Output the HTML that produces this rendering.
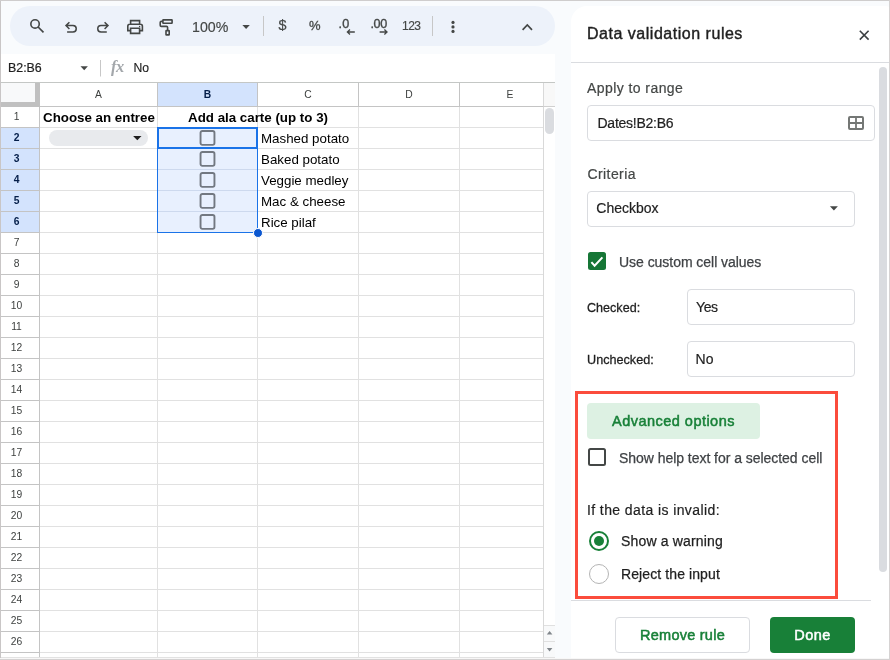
<!DOCTYPE html>
<html><head><meta charset="utf-8"><title>Data validation</title>
<style>
*{box-sizing:border-box;margin:0;padding:0}
html,body{width:890px;height:660px;overflow:hidden}
body{background:#f9fbfd;font-family:"Liberation Sans",sans-serif;position:relative;color:#1f1f1f}
.a{position:absolute}
.t{position:absolute;white-space:nowrap;line-height:1}
svg{position:absolute;overflow:visible}
#wrap{position:absolute;left:0;top:0;width:890px;height:660px;will-change:transform}
#frameL{left:0;top:0;width:1px;height:660px;background:#c9c6c6}
#frameT{left:0;top:0;width:890px;height:1px;background:#cfcdcd}
#frameB{left:0;top:659px;width:890px;height:1px;background:#d4d1d1}
#frameB2{left:0;top:658px;width:890px;height:1px;background:#f8f7f7}
#frameR{left:889px;top:0;width:1px;height:660px;background:#d6d3d3}
#pill{left:10px;top:6px;width:545px;height:40px;border-radius:20px;background:#edf2fa}
#fbar{left:1px;top:54px;width:554px;height:28px;background:#fff}
#fline{left:1px;top:82px;width:554px;height:1px;background:#c4c7c5}
#grid{left:1px;top:83px;width:554px;height:575px;background:#fff;overflow:hidden}
.vl{position:absolute;width:1px;background:#e1e1e1}
.hl{position:absolute;height:1px;background:#e1e1e1}
.rh{position:absolute;left:0;width:39px;height:20px;font-size:10.3px;color:#3c3f3e;text-align:center;line-height:19px;padding-right:8px}
.rh.sel{background:#d3e3fd;color:#041e49;font-weight:bold}
.ch{position:absolute;top:0;height:23px;font-size:10.3px;color:#3c3f3e;text-align:center;line-height:23px}
.ch.sel{background:#d3e3fd;color:#041e49;font-weight:bold}
.cell{position:absolute;font-size:13.33px;line-height:21px;white-space:nowrap;color:#000}
.cb{position:absolute;width:15.8px;height:15.8px;border:1.9px solid #727881;border-radius:2.6px}
#panel{left:571px;top:6px;width:329px;height:652px;background:#fff;border-radius:16px 16px 0 0}
.inp{position:absolute;border:1px solid #dadce0;border-radius:4px;background:#fff}
</style></head><body>
<div id="wrap">
<div class="a" id="pill"></div>
<div class="a" id="fbar"></div>
<div class="a" id="fline"></div>
<svg style="left:0;top:0" width="560" height="50" viewBox="0 0 560 50" fill="none" stroke="#444746" stroke-width="1.6">
<circle cx="35.05" cy="23.95" r="4.2"/><path d="M38.1 27 L43.5 32.3" stroke-width="1.7"/>
<path d="M69.4 22.2 L66 25.6 L69.4 29 M66.2 25.6 H73 a3.25 3.25 0 0 1 0 6.5 H67.1" stroke-width="1.5"/>
<path d="M104.6 22.2 L108 25.6 L104.6 29 M107.8 25.6 H101 a3.25 3.25 0 0 0 0 6.5 H106.8" stroke-width="1.5"/>
<path d="M130.6 24.2 V20.6 H139.6 V24.2 M130.6 30.6 H127.8 V26.2 a2 2 0 0 1 2 -2 H140.4 a2 2 0 0 1 2 2 V30.6 H139.6 M130.6 28.2 H139.6 V33.4 H130.6 Z"/>
<rect x="162.9" y="19.9" width="9.2" height="3.3" rx="0.4"/><path d="M162.9 21.4 H161.4 Q160.2 21.4 160.2 22.6 V25.3 Q160.2 26.4 161.3 26.4 H166.5 Q167.6 26.4 167.6 27.5 V30.4"/><rect x="166" y="30.6" width="3.2" height="4.3" rx="0.4"/><circle cx="139.6" cy="26.5" r="0.7" fill="#444746" stroke="none"/>
<path d="M263.5 16 V36 M432.5 16 V36" stroke="#c7c7c7" stroke-width="1"/>
<path d="M242.4 25 H249.8 L246.1 29 Z" fill="#444746" stroke="none"/>
<path d="M354.8 32 H347.6 M350 29.6 L347.4 32 L350 34.4" stroke-width="1.3"/>
<path d="M379.6 32 H386.8 M384.4 29.6 L387 32 L384.4 34.4" stroke-width="1.3"/>
<circle cx="453" cy="22.4" r="1.6" fill="#444746" stroke="none"/><circle cx="453" cy="26.9" r="1.6" fill="#444746" stroke="none"/><circle cx="453" cy="31.4" r="1.6" fill="#444746" stroke="none"/>
<path d="M522.6 29.8 L527.3 25 L532 29.8" stroke-width="1.7"/>
</svg>
<div class="t" style="left:192px;top:20px;font-size:14.2px;color:#444746;-webkit-text-stroke:0.15px #444746">100%</div>
<div class="t" style="left:278.6px;top:18px;font-size:14.4px;color:#444746;-webkit-text-stroke:0.2px #444746">$</div>
<div class="t" style="left:309px;top:19px;font-size:13px;color:#444746;-webkit-text-stroke:0.3px #444746;letter-spacing:-0.3px">%</div>
<div class="t" style="left:338.5px;top:18px;font-size:12.6px;color:#444746;-webkit-text-stroke:0.35px #444746;letter-spacing:0.2px">.0</div>
<div class="t" style="left:370.5px;top:18px;font-size:12.6px;color:#444746;-webkit-text-stroke:0.35px #444746;letter-spacing:-0.4px">.00</div>
<div class="t" style="left:402px;top:20px;font-size:12px;color:#444746;letter-spacing:-0.5px;-webkit-text-stroke:0.15px #444746">123</div>
<div class="t" style="left:8px;top:62px;font-size:12.4px;color:#1f1f1f;-webkit-text-stroke:0.2px #1f1f1f">B2:B6</div>
<svg style="left:0;top:50px" width="160" height="34" viewBox="0 50 160 34"><path d="M80.5 66.2 H87.9 L84.2 70.2 Z" fill="#444746"/><path d="M100.5 60 V76.5" stroke="#c7c7c7" stroke-width="1"/></svg>
<div class="t" style="left:111px;top:59px;font-size:16.5px;color:#a3a7ab;font-family:'Liberation Serif',serif;font-style:italic;font-weight:bold;letter-spacing:-0.6px">fx</div>
<div class="t" style="left:133.5px;top:62px;font-size:12.2px;color:#1f1f1f;-webkit-text-stroke:0.15px #1f1f1f">No</div>
<div class="a" id="grid">
<div class="a" style="left:0;top:0;width:34px;height:19px;background:#f8f9fa"></div>
<div class="a" style="left:34px;top:0;width:5px;height:24px;background:#c0c0c0"></div>
<div class="a" style="left:0;top:19px;width:39px;height:5px;background:#c0c0c0"></div>
<div class="ch" style="left:39px;width:117px">A</div>
<div class="ch sel" style="left:157px;width:99px">B</div>
<div class="ch" style="left:257px;width:100px">C</div>
<div class="ch" style="left:358px;width:100px">D</div>
<div class="ch" style="left:459px;width:100px">E</div>
<div class="rh" style="top:24px">1</div>
<div class="rh sel" style="top:45px">2</div>
<div class="rh sel" style="top:66px">3</div>
<div class="rh sel" style="top:87px">4</div>
<div class="rh sel" style="top:108px">5</div>
<div class="rh sel" style="top:129px">6</div>
<div class="rh" style="top:150px">7</div>
<div class="rh" style="top:171px">8</div>
<div class="rh" style="top:192px">9</div>
<div class="rh" style="top:213px">10</div>
<div class="rh" style="top:234px">11</div>
<div class="rh" style="top:255px">12</div>
<div class="rh" style="top:276px">13</div>
<div class="rh" style="top:297px">14</div>
<div class="rh" style="top:318px">15</div>
<div class="rh" style="top:339px">16</div>
<div class="rh" style="top:360px">17</div>
<div class="rh" style="top:381px">18</div>
<div class="rh" style="top:402px">19</div>
<div class="rh" style="top:423px">20</div>
<div class="rh" style="top:444px">21</div>
<div class="rh" style="top:465px">22</div>
<div class="rh" style="top:486px">23</div>
<div class="rh" style="top:507px">24</div>
<div class="rh" style="top:528px">25</div>
<div class="rh" style="top:549px">26</div>
<div class="rh" style="top:570px">27</div>
<div class="a" style="left:157px;top:45px;width:99px;height:104px;background:#e8f0fe"></div>
<div class="vl" style="left:156px;top:0;height:575px"></div>
<div class="vl" style="left:256px;top:0;height:575px"></div>
<div class="vl" style="left:357px;top:0;height:575px"></div>
<div class="vl" style="left:458px;top:0;height:575px"></div>
<div class="vl" style="left:559px;top:0;height:575px"></div>
<div class="vl" style="left:156px;top:0;height:23px;background:#c4c4c4"></div>
<div class="vl" style="left:256px;top:0;height:23px;background:#c4c4c4"></div>
<div class="vl" style="left:357px;top:0;height:23px;background:#c4c4c4"></div>
<div class="vl" style="left:458px;top:0;height:23px;background:#c4c4c4"></div>
<div class="vl" style="left:559px;top:0;height:23px;background:#c4c4c4"></div>
<div class="vl" style="left:38px;top:24px;height:551px;background:#c4c4c4"></div>
<div class="hl" style="left:39px;top:23px;width:516px;background:#c4c4c4"></div>
<div class="hl" style="left:0;top:44px;width:543px"></div>
<div class="hl" style="left:0;top:65px;width:543px"></div>
<div class="hl" style="left:0;top:86px;width:543px"></div>
<div class="hl" style="left:0;top:107px;width:543px"></div>
<div class="hl" style="left:0;top:128px;width:543px"></div>
<div class="hl" style="left:0;top:149px;width:543px"></div>
<div class="hl" style="left:0;top:170px;width:543px"></div>
<div class="hl" style="left:0;top:191px;width:543px"></div>
<div class="hl" style="left:0;top:212px;width:543px"></div>
<div class="hl" style="left:0;top:233px;width:543px"></div>
<div class="hl" style="left:0;top:254px;width:543px"></div>
<div class="hl" style="left:0;top:275px;width:543px"></div>
<div class="hl" style="left:0;top:296px;width:543px"></div>
<div class="hl" style="left:0;top:317px;width:543px"></div>
<div class="hl" style="left:0;top:338px;width:543px"></div>
<div class="hl" style="left:0;top:359px;width:543px"></div>
<div class="hl" style="left:0;top:380px;width:543px"></div>
<div class="hl" style="left:0;top:401px;width:543px"></div>
<div class="hl" style="left:0;top:422px;width:543px"></div>
<div class="hl" style="left:0;top:443px;width:543px"></div>
<div class="hl" style="left:0;top:464px;width:543px"></div>
<div class="hl" style="left:0;top:485px;width:543px"></div>
<div class="hl" style="left:0;top:506px;width:543px"></div>
<div class="hl" style="left:0;top:527px;width:543px"></div>
<div class="hl" style="left:0;top:548px;width:543px"></div>
<div class="hl" style="left:0;top:569px;width:543px"></div>
<div class="hl" style="left:0;top:590px;width:543px"></div>
<div class="hl" style="left:0;top:44px;width:39px;background:#c4c4c4"></div>
<div class="hl" style="left:0;top:65px;width:39px;background:#c4c4c4"></div>
<div class="hl" style="left:0;top:86px;width:39px;background:#c4c4c4"></div>
<div class="hl" style="left:0;top:107px;width:39px;background:#c4c4c4"></div>
<div class="hl" style="left:0;top:128px;width:39px;background:#c4c4c4"></div>
<div class="hl" style="left:0;top:149px;width:39px;background:#c4c4c4"></div>
<div class="hl" style="left:0;top:170px;width:39px;background:#c4c4c4"></div>
<div class="hl" style="left:0;top:191px;width:39px;background:#c4c4c4"></div>
<div class="hl" style="left:0;top:212px;width:39px;background:#c4c4c4"></div>
<div class="hl" style="left:0;top:233px;width:39px;background:#c4c4c4"></div>
<div class="hl" style="left:0;top:254px;width:39px;background:#c4c4c4"></div>
<div class="hl" style="left:0;top:275px;width:39px;background:#c4c4c4"></div>
<div class="hl" style="left:0;top:296px;width:39px;background:#c4c4c4"></div>
<div class="hl" style="left:0;top:317px;width:39px;background:#c4c4c4"></div>
<div class="hl" style="left:0;top:338px;width:39px;background:#c4c4c4"></div>
<div class="hl" style="left:0;top:359px;width:39px;background:#c4c4c4"></div>
<div class="hl" style="left:0;top:380px;width:39px;background:#c4c4c4"></div>
<div class="hl" style="left:0;top:401px;width:39px;background:#c4c4c4"></div>
<div class="hl" style="left:0;top:422px;width:39px;background:#c4c4c4"></div>
<div class="hl" style="left:0;top:443px;width:39px;background:#c4c4c4"></div>
<div class="hl" style="left:0;top:464px;width:39px;background:#c4c4c4"></div>
<div class="hl" style="left:0;top:485px;width:39px;background:#c4c4c4"></div>
<div class="hl" style="left:0;top:506px;width:39px;background:#c4c4c4"></div>
<div class="hl" style="left:0;top:527px;width:39px;background:#c4c4c4"></div>
<div class="hl" style="left:0;top:548px;width:39px;background:#c4c4c4"></div>
<div class="hl" style="left:0;top:569px;width:39px;background:#c4c4c4"></div>
<div class="hl" style="left:0;top:590px;width:39px;background:#c4c4c4"></div>
<div class="hl" style="left:157px;top:65px;width:99px;background:#cdd9ee"></div>
<div class="hl" style="left:157px;top:86px;width:99px;background:#cdd9ee"></div>
<div class="hl" style="left:157px;top:107px;width:99px;background:#cdd9ee"></div>
<div class="hl" style="left:157px;top:128px;width:99px;background:#cdd9ee"></div>
<div class="cell" style="left:42px;top:24px;font-weight:bold">Choose an entree</div>
<div class="cell" style="left:157px;top:24px;width:200px;text-align:center;font-weight:bold">Add ala carte (up to 3)</div>
<div class="cell" style="left:260px;top:45px">Mashed potato</div>
<svg style="left:198px;top:46px" width="18" height="18" viewBox="0 0 18 18"><rect x="1.55" y="1.95" width="13.9" height="13.9" rx="1.8" fill="none" stroke="#727881" stroke-width="1.9"/></svg>
<div class="cell" style="left:260px;top:66px">Baked potato</div>
<svg style="left:198px;top:67px" width="18" height="18" viewBox="0 0 18 18"><rect x="1.55" y="1.95" width="13.9" height="13.9" rx="1.8" fill="none" stroke="#727881" stroke-width="1.9"/></svg>
<div class="cell" style="left:260px;top:87px">Veggie medley</div>
<svg style="left:198px;top:88px" width="18" height="18" viewBox="0 0 18 18"><rect x="1.55" y="1.95" width="13.9" height="13.9" rx="1.8" fill="none" stroke="#727881" stroke-width="1.9"/></svg>
<div class="cell" style="left:260px;top:108px">Mac &amp; cheese</div>
<svg style="left:198px;top:109px" width="18" height="18" viewBox="0 0 18 18"><rect x="1.55" y="1.95" width="13.9" height="13.9" rx="1.8" fill="none" stroke="#727881" stroke-width="1.9"/></svg>
<div class="cell" style="left:260px;top:129px">Rice pilaf</div>
<svg style="left:198px;top:130px" width="18" height="18" viewBox="0 0 18 18"><rect x="1.55" y="1.95" width="13.9" height="13.9" rx="1.8" fill="none" stroke="#727881" stroke-width="1.9"/></svg>
<div class="a" style="left:48px;top:47px;width:99px;height:16px;border-radius:8px;background:#e8eaed"></div>
<svg style="left:129px;top:51px" width="14" height="8" viewBox="130 134 14 8"><path d="M133.1 136 H141.5 L137.3 140.3 Z" fill="#1f1f1f"/></svg>
<div class="a" style="left:156px;top:44px;width:101px;height:106px;border:1px solid #1a73e8"></div>
<div class="a" style="left:156px;top:44px;width:101px;height:22px;border:2px solid #1a73e8"></div>
<div class="a" style="left:252px;top:145px;width:10px;height:10px;border-radius:50%;background:#0b57d0;border:1px solid #fff"></div>
<div class="a" style="left:542px;top:0;width:13px;height:575px;background:#fff;border-left:1px solid #d9d9d9"></div>
<div class="a" style="left:543px;top:0;width:12px;height:23px;background:#f8f8f8"></div>
<div class="a" style="left:542px;top:23px;width:13px;height:1px;background:#d0d0d0"></div>
<div class="a" style="left:544px;top:25px;width:9px;height:26px;border-radius:4.5px;background:#dadce0"></div>
<div class="a" style="left:543px;top:542px;width:12px;height:33px;background:#f8f9fa;border-top:1px solid #e0e0e0"></div>
<div class="a" style="left:543px;top:558px;width:12px;height:1px;background:#e0e0e0"></div>
<svg style="left:543px;top:542px" width="12" height="33" viewBox="544 625 12 33"><path d="M546.8 634.4 L549.6 631 L552.4 634.4 Z M546.8 648 L549.6 651.4 L552.4 648 Z" fill="#80868b"/></svg>
<div class="a" style="left:0;top:574px;width:554px;height:1px;background:#e2e2e2"></div>
</div>
<div class="a" id="panel"></div>
<div class="t" style="left:587px;top:26px;font-size:16px;color:#1f1f1f;letter-spacing:0.52px;-webkit-text-stroke:0.4px #1f1f1f">Data validation rules</div>
<svg style="left:855px;top:26px" width="20" height="20" viewBox="855 26 20 20"><path d="M859.8 30.8 L868.6 39.6 M868.6 30.8 L859.8 39.6" stroke="#3c4043" stroke-width="1.6" fill="none"/></svg>
<div class="a" style="left:571px;top:62px;width:319px;height:1px;background:#dadce0"></div>
<div class="a" style="left:879px;top:67px;width:8px;height:505px;border-radius:4px;background:#dadce0"></div>
<div class="t" style="left:587px;top:81px;font-size:14px;color:#444746;letter-spacing:0.43px;-webkit-text-stroke:0.2px #444746">Apply to range</div>
<div class="inp" style="left:587px;top:105px;width:288px;height:36px"></div>
<div class="t" style="left:597.5px;top:116px;font-size:14px;color:#1f1f1f;letter-spacing:-0.25px;-webkit-text-stroke:0.2px #1f1f1f">Dates!B2:B6</div>
<svg style="left:845px;top:112px" width="22" height="22" viewBox="845 112 22 22"><rect x="849" y="117" width="14" height="12" rx="1" stroke="#747775" stroke-width="2" fill="none"/><path d="M856 117 V129 M849 123 H863" stroke="#747775" stroke-width="1.8" fill="none"/></svg>
<div class="t" style="left:587.5px;top:167px;font-size:14px;color:#444746;letter-spacing:0.41px;-webkit-text-stroke:0.2px #444746">Criteria</div>
<div class="inp" style="left:587px;top:191px;width:268px;height:36px"></div>
<div class="t" style="left:596.3px;top:201px;font-size:14px;color:#1f1f1f;-webkit-text-stroke:0.2px #1f1f1f">Checkbox</div>
<svg style="left:825px;top:200px" width="16" height="16" viewBox="825 200 16 16"><path d="M829.9 206.3 H837.9 L833.9 210.5 Z" fill="#444746"/></svg>
<div class="a" style="left:588px;top:252px;width:18px;height:18px;border-radius:2.5px;background:#167636"></div>
<svg style="left:588px;top:252px" width="18" height="18" viewBox="0 0 18 18"><path d="M3.4 10.2 L6.6 13.7 L14.4 5.4" stroke="#fff" stroke-width="2" fill="none"/></svg>
<div class="t" style="left:619px;top:255px;font-size:14px;color:#3f4245;letter-spacing:-0.04px;-webkit-text-stroke:0.25px #3f4245">Use custom cell values</div>
<div class="t" style="left:587px;top:300.5px;font-size:13.6px;color:#1f1f1f;transform:scaleX(0.925);transform-origin:0 0;-webkit-text-stroke:0.3px #1f1f1f">Checked:</div>
<div class="inp" style="left:687px;top:289px;width:168px;height:36px"></div>
<div class="t" style="left:696px;top:300px;font-size:14px;color:#1f1f1f;letter-spacing:-0.4px;-webkit-text-stroke:0.2px #1f1f1f">Yes</div>
<div class="t" style="left:586.5px;top:352.5px;font-size:13.6px;color:#1f1f1f;transform:scaleX(0.93);transform-origin:0 0;-webkit-text-stroke:0.3px #1f1f1f">Unchecked:</div>
<div class="inp" style="left:687px;top:341px;width:168px;height:36px"></div>
<div class="t" style="left:695.6px;top:352px;font-size:14px;color:#1f1f1f;-webkit-text-stroke:0.2px #1f1f1f">No</div>
<div class="a" style="left:575px;top:391px;width:263px;height:208px;border:3px solid #fb4c3c"></div>
<div class="a" style="left:587px;top:403px;width:173px;height:36px;border-radius:4px;background:#ddf1e3"></div>
<div class="t" style="left:587px;top:414px;width:173px;text-align:center;font-size:14.5px;color:#188038;letter-spacing:0.47px;-webkit-text-stroke:0.5px #188038">Advanced options</div>
<div class="a" style="left:588px;top:448px;width:18px;height:18px;border-radius:2.5px;border:2px solid #444746"></div>
<div class="t" style="left:619px;top:451px;font-size:14px;color:#3f4245;letter-spacing:-0.04px;-webkit-text-stroke:0.25px #3f4245">Show help text for a selected cell</div>
<div class="t" style="left:587px;top:503px;font-size:14px;color:#1f1f1f;letter-spacing:0.4px;-webkit-text-stroke:0.2px #1f1f1f">If the data is invalid:</div>
<div class="a" style="left:589px;top:531px;width:20px;height:20px;border-radius:50%;border:2px solid #188038"></div>
<div class="a" style="left:594px;top:536px;width:10px;height:10px;border-radius:50%;background:#188038"></div>
<div class="t" style="left:621px;top:534px;font-size:14px;color:#1f1f1f;letter-spacing:0.17px;-webkit-text-stroke:0.25px #1f1f1f">Show a warning</div>
<div class="a" style="left:589px;top:564px;width:20px;height:20px;border-radius:50%;border:1px solid #b4b4b4"></div>
<div class="t" style="left:621px;top:567px;font-size:14px;color:#1f1f1f;letter-spacing:0.1px;-webkit-text-stroke:0.25px #1f1f1f">Reject the input</div>
<div class="a" style="left:571px;top:600px;width:300px;height:1px;background:#dadce0"></div>
<div class="inp" style="left:615px;top:617px;width:135px;height:36px"></div>
<div class="t" style="left:615px;top:628px;width:135px;text-align:center;font-size:14.5px;color:#188038;letter-spacing:0.25px;-webkit-text-stroke:0.5px #188038">Remove rule</div>
<div class="a" style="left:770px;top:617px;width:85px;height:36px;border-radius:4px;background:#188038"></div>
<div class="t" style="left:770px;top:628px;width:85px;text-align:center;font-size:14.5px;color:#fff;letter-spacing:0.5px;-webkit-text-stroke:0.5px #fff">Done</div>
<div class="a" id="frameL"></div>
<div class="a" id="frameT"></div>
<div class="a" id="frameB"></div>
<div class="a" id="frameB2"></div>
<div class="a" id="frameR"></div>
</div>
</body></html>
